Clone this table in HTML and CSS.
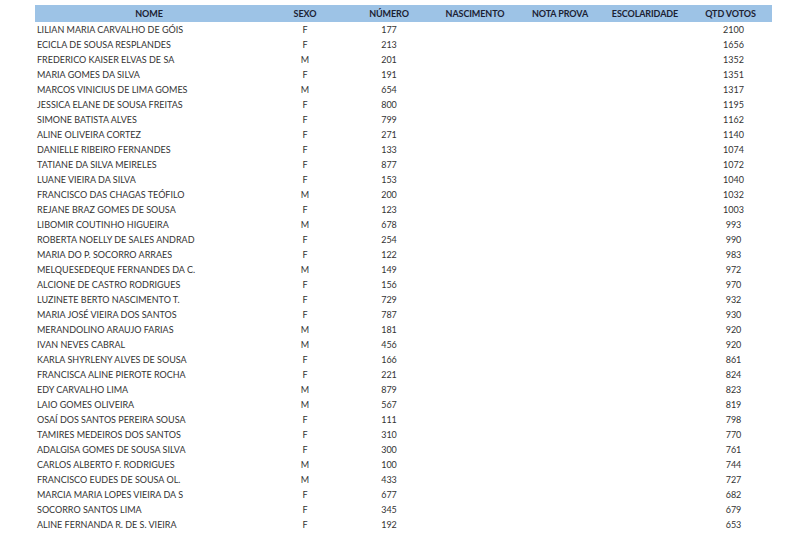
FILE: index.html
```html
<!DOCTYPE html>
<html lang="pt">
<head>
<meta charset="utf-8">
<link rel="stylesheet" href="styles.css">
</head>
<body>
<div class="lista" role="table">
<div class="linha cab" role="row"><span>NOME</span><span>SEXO</span><span>NÚMERO</span><span>NASCIMENTO</span><span>NOTA PROVA</span><span>ESCOLARIDADE</span><span>QTD VOTOS</span></div>
<div class="linha" role="row"><span class="nome">LILIAN MARIA CARVALHO DE GÓIS</span><span>F</span><span>177</span><span></span><span></span><span></span><span class="votos">2100</span></div>
<div class="linha" role="row"><span class="nome">ECICLA DE SOUSA RESPLANDES</span><span>F</span><span>213</span><span></span><span></span><span></span><span class="votos">1656</span></div>
<div class="linha" role="row"><span class="nome">FREDERICO KAISER ELVAS DE SA</span><span>M</span><span>201</span><span></span><span></span><span></span><span class="votos">1352</span></div>
<div class="linha" role="row"><span class="nome">MARIA GOMES DA SILVA</span><span>F</span><span>191</span><span></span><span></span><span></span><span class="votos">1351</span></div>
<div class="linha" role="row"><span class="nome">MARCOS VINICIUS DE LIMA GOMES</span><span>M</span><span>654</span><span></span><span></span><span></span><span class="votos">1317</span></div>
<div class="linha" role="row"><span class="nome">JESSICA ELANE DE SOUSA FREITAS</span><span>F</span><span>800</span><span></span><span></span><span></span><span class="votos">1195</span></div>
<div class="linha" role="row"><span class="nome">SIMONE BATISTA ALVES</span><span>F</span><span>799</span><span></span><span></span><span></span><span class="votos">1162</span></div>
<div class="linha" role="row"><span class="nome">ALINE OLIVEIRA CORTEZ</span><span>F</span><span>271</span><span></span><span></span><span></span><span class="votos">1140</span></div>
<div class="linha" role="row"><span class="nome">DANIELLE RIBEIRO FERNANDES</span><span>F</span><span>133</span><span></span><span></span><span></span><span class="votos">1074</span></div>
<div class="linha" role="row"><span class="nome">TATIANE DA SILVA MEIRELES</span><span>F</span><span>877</span><span></span><span></span><span></span><span class="votos">1072</span></div>
<div class="linha" role="row"><span class="nome">LUANE VIEIRA DA SILVA</span><span>F</span><span>153</span><span></span><span></span><span></span><span class="votos">1040</span></div>
<div class="linha" role="row"><span class="nome">FRANCISCO DAS CHAGAS TEÓFILO</span><span>M</span><span>200</span><span></span><span></span><span></span><span class="votos">1032</span></div>
<div class="linha" role="row"><span class="nome">REJANE BRAZ GOMES DE SOUSA</span><span>F</span><span>123</span><span></span><span></span><span></span><span class="votos">1003</span></div>
<div class="linha" role="row"><span class="nome">LIBOMIR COUTINHO HIGUEIRA</span><span>M</span><span>678</span><span></span><span></span><span></span><span class="votos">993</span></div>
<div class="linha" role="row"><span class="nome">ROBERTA NOELLY DE SALES ANDRAD</span><span>F</span><span>254</span><span></span><span></span><span></span><span class="votos">990</span></div>
<div class="linha" role="row"><span class="nome">MARIA DO P. SOCORRO ARRAES</span><span>F</span><span>122</span><span></span><span></span><span></span><span class="votos">983</span></div>
<div class="linha" role="row"><span class="nome">MELQUESEDEQUE FERNANDES DA C.</span><span>M</span><span>149</span><span></span><span></span><span></span><span class="votos">972</span></div>
<div class="linha" role="row"><span class="nome">ALCIONE DE CASTRO RODRIGUES</span><span>F</span><span>156</span><span></span><span></span><span></span><span class="votos">970</span></div>
<div class="linha" role="row"><span class="nome">LUZINETE BERTO NASCIMENTO T.</span><span>F</span><span>729</span><span></span><span></span><span></span><span class="votos">932</span></div>
<div class="linha" role="row"><span class="nome">MARIA JOSÉ VIEIRA DOS SANTOS</span><span>F</span><span>787</span><span></span><span></span><span></span><span class="votos">930</span></div>
<div class="linha" role="row"><span class="nome">MERANDOLINO ARAUJO FARIAS</span><span>M</span><span>181</span><span></span><span></span><span></span><span class="votos">920</span></div>
<div class="linha" role="row"><span class="nome">IVAN NEVES CABRAL</span><span>M</span><span>456</span><span></span><span></span><span></span><span class="votos">920</span></div>
<div class="linha" role="row"><span class="nome">KARLA SHYRLENY ALVES DE SOUSA</span><span>F</span><span>166</span><span></span><span></span><span></span><span class="votos">861</span></div>
<div class="linha" role="row"><span class="nome">FRANCISCA ALINE PIEROTE ROCHA</span><span>F</span><span>221</span><span></span><span></span><span></span><span class="votos">824</span></div>
<div class="linha" role="row"><span class="nome">EDY CARVALHO LIMA</span><span>M</span><span>879</span><span></span><span></span><span></span><span class="votos">823</span></div>
<div class="linha" role="row"><span class="nome">LAIO GOMES OLIVEIRA</span><span>M</span><span>567</span><span></span><span></span><span></span><span class="votos">819</span></div>
<div class="linha" role="row"><span class="nome">OSAÍ DOS SANTOS PEREIRA SOUSA</span><span>F</span><span>111</span><span></span><span></span><span></span><span class="votos">798</span></div>
<div class="linha" role="row"><span class="nome">TAMIRES MEDEIROS DOS SANTOS</span><span>F</span><span>310</span><span></span><span></span><span></span><span class="votos">770</span></div>
<div class="linha" role="row"><span class="nome">ADALGISA GOMES DE SOUSA SILVA</span><span>F</span><span>300</span><span></span><span></span><span></span><span class="votos">761</span></div>
<div class="linha" role="row"><span class="nome">CARLOS ALBERTO F. RODRIGUES</span><span>M</span><span>100</span><span></span><span></span><span></span><span class="votos">744</span></div>
<div class="linha" role="row"><span class="nome">FRANCISCO EUDES DE SOUSA OL.</span><span>M</span><span>433</span><span></span><span></span><span></span><span class="votos">727</span></div>
<div class="linha" role="row"><span class="nome">MARCIA MARIA LOPES VIEIRA DA S</span><span>F</span><span>677</span><span></span><span></span><span></span><span class="votos">682</span></div>
<div class="linha" role="row"><span class="nome">SOCORRO SANTOS LIMA</span><span>F</span><span>345</span><span></span><span></span><span></span><span class="votos">679</span></div>
<div class="linha" role="row"><span class="nome">ALINE FERNANDA R. DE S. VIEIRA</span><span>F</span><span>192</span><span></span><span></span><span></span><span class="votos">653</span></div>
</div>
</body>
</html>
```
FILE: styles.css
```css
html, body {
  margin: 0;
  padding: 0;
  background: #ffffff;
}
body {
  padding: 5px 0 0 35px;
  font-family: Lato, "Open Sans", "Liberation Sans", sans-serif;
}
.lista {
  width: 737px;
  display: flex;
  flex-direction: column;
}
.linha {
  display: grid;
  grid-template-columns: 228px 84px 84px 88px 82px 88px 83px;
  height: 15px;
  align-items: center;
  font-size: 9px;
  line-height: 12px;
  color: #333333;
  text-align: center;
  white-space: nowrap;
}
.linha.cab {
  height: 17px;
  background: #9dc3e6;
  color: #1c2233;
  font-weight: 700;
  letter-spacing: -0.1px;
}
.linha .nome {
  text-align: left;
  padding-left: 2px;
  overflow: hidden;
}
.linha .votos {
  padding-left: 6px;
}
```
